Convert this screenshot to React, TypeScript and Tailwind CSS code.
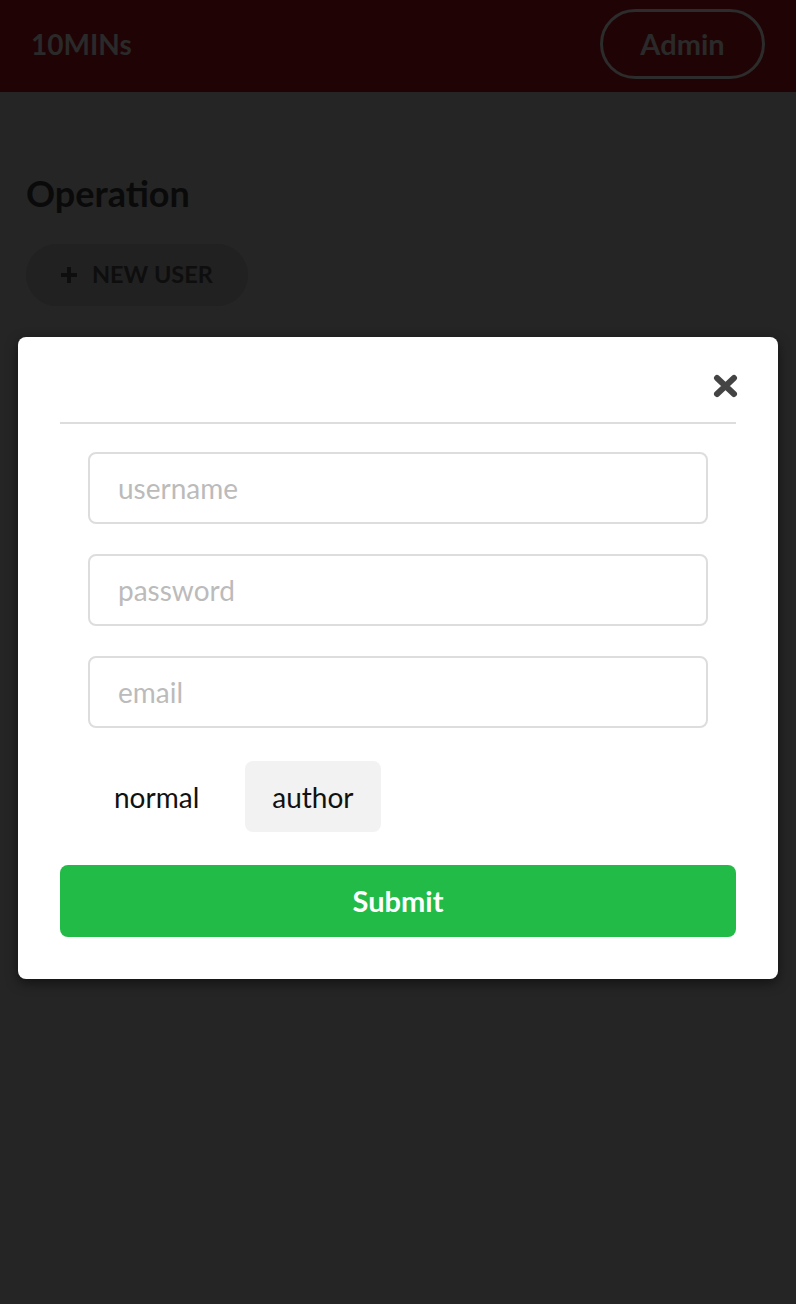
export default function App() {
  const font = { fontFamily: "Lato, 'Noto Sans', sans-serif" };
  return (
    <div style={font} className="relative min-h-[1304px] w-[796px] bg-[#252525]">
      <header className="flex h-[92px] items-center justify-between bg-[#200405] px-[31px] pb-[4px]">
        <span className="text-[28px] font-bold text-[#2a2a2a]">10MINs</span>
        <button className="h-[70px] w-[165px] rounded-full border-[3px] border-[#2c2c2c] text-[29px] font-bold text-[#2a2a2a]">
          Admin
        </button>
      </header>

      <main className="px-[26px] pt-[79px]">
        <h1 className="text-[36px] font-bold leading-[44px] text-[#0a0a0a]">Operation</h1>
        <button className="mt-[29px] flex h-[62px] w-[222px] items-center gap-[14px] rounded-full bg-[#212121] px-[34px] text-[23.5px] font-bold text-[#0e0e0e]">
          <svg width="18" height="18" viewBox="0 0 18 18">
            <path d="M9 1v16M1 9h16" stroke="#0e0e0e" strokeWidth="4" />
          </svg>
          NEW USER
        </button>
      </main>

      <div className="absolute left-[18px] top-[337px] w-[760px] rounded-[8px] bg-white px-[42px] pb-[42px] pt-[37px] shadow-[0_4px_12px_rgba(0,0,0,0.5)]">
        <div className="flex justify-end">
          <svg width="25" height="24" viewBox="0 0 25 24" className="mr-[-2px]">
            <path d="M4 4l17 16M21 4L4 20" stroke="#444" strokeWidth="6" strokeLinecap="round" />
          </svg>
        </div>
        <div className="mt-[24px] h-[2px] bg-[#dddddd]" />
        <div className="flex flex-col gap-[30px] px-[28px] pt-[28px]">
          {["username", "password", "email"].map((p) => (
            <input
              key={p}
              placeholder={p}
              style={font}
              className="h-[72px] w-full rounded-[8px] border-2 border-[#dddddd] px-[28px] text-[28px] text-[#333] outline-none placeholder:text-[#bbbbbb]"
            />
          ))}
          <div className="mt-[3px] flex gap-[20px]">
            <button className="h-[71px] rounded-[8px] px-[26px] text-[28px] text-[#111]">normal</button>
            <button className="h-[71px] rounded-[8px] bg-[#f2f2f2] px-[27px] text-[28px] text-[#111]">author</button>
          </div>
        </div>
        <button className="mt-[33px] h-[72px] w-full rounded-[8px] bg-[#22bb47] text-[29px] font-bold text-white">
          Submit
        </button>
      </div>
    </div>
  );
}
